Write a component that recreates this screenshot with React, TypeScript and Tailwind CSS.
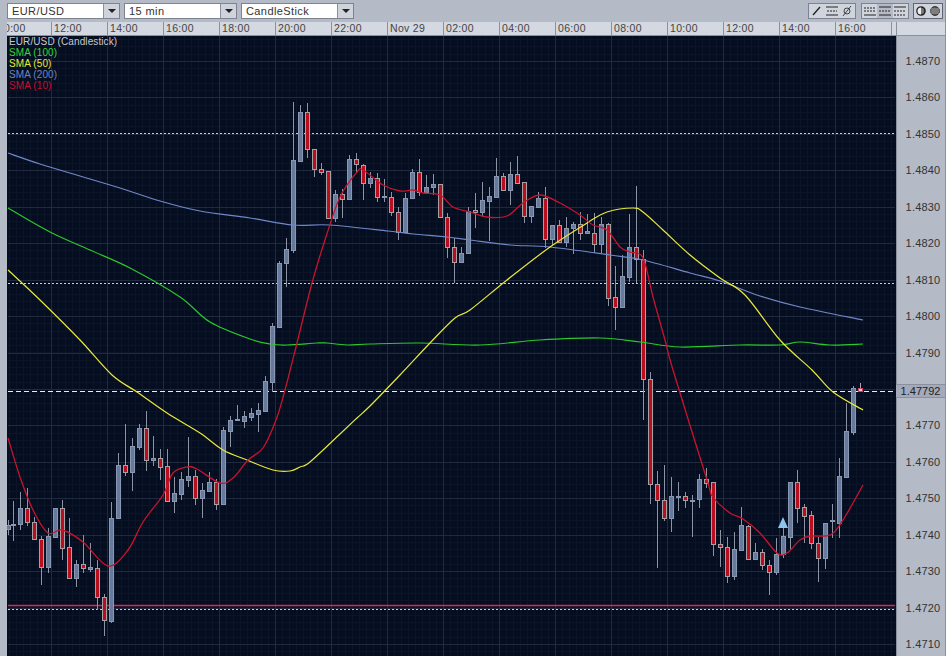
import React from 'react';

type Candle = [number, number, number, number, number, number?];

// x, wick top, body top, body bottom, wick bottom (trailing 1 = down candle)
const candles: Candle[] = [
  [8, 520, 525, 529, 535],
  [13, 501, 524, 525, 541],
  [20, 492, 508, 524, 530],
  [27, 488, 508, 522, 526, 1],
  [34, 517, 522, 539, 540, 1],
  [41, 536, 539, 567, 585, 1],
  [48, 528, 536, 567, 573],
  [55, 508, 508, 537, 537],
  [62, 500, 508, 548, 560, 1],
  [69, 518, 547, 578, 578, 1],
  [76, 560, 564, 578, 587],
  [83, 535, 564, 568, 573, 1],
  [90, 543, 567, 569, 572],
  [97, 560, 568, 597, 610, 1],
  [104, 594, 597, 620, 636, 1],
  [111, 502, 518, 621, 623],
  [118, 453, 465, 518, 518],
  [125, 424, 465, 472, 476, 1],
  [132, 438, 446, 472, 491],
  [139, 424, 428, 447, 450],
  [146, 411, 428, 460, 471, 1],
  [153, 436, 458, 460, 466],
  [160, 449, 458, 467, 480, 1],
  [167, 449, 466, 501, 500, 1],
  [174, 477, 493, 501, 513],
  [181, 472, 479, 494, 500],
  [188, 437, 476, 480, 487],
  [195, 470, 476, 498, 505, 1],
  [202, 483, 490, 498, 518],
  [209, 472, 482, 491, 491],
  [216, 479, 482, 504, 510, 1],
  [223, 427, 430, 504, 504],
  [230, 416, 420, 431, 447],
  [237, 405, 419, 420, 420],
  [244, 411, 416, 421, 428],
  [251, 408, 413, 417, 421],
  [258, 403, 410, 414, 432],
  [265, 376, 381, 411, 411],
  [272, 323, 326, 382, 392],
  [279, 261, 263, 327, 327],
  [286, 238, 249, 263, 287],
  [293, 102, 160, 250, 253],
  [300, 105, 112, 161, 161],
  [307, 103, 112, 149, 158, 1],
  [314, 149, 149, 169, 177, 1],
  [321, 163, 169, 172, 175, 1],
  [328, 171, 171, 218, 218, 1],
  [335, 190, 194, 218, 222],
  [342, 189, 194, 199, 218, 1],
  [349, 155, 159, 199, 199],
  [356, 153, 159, 164, 172, 1],
  [363, 164, 165, 183, 200, 1],
  [370, 172, 178, 183, 188],
  [377, 173, 178, 197, 202, 1],
  [384, 179, 196, 197, 202],
  [391, 192, 197, 212, 216, 1],
  [398, 207, 212, 232, 240, 1],
  [405, 193, 198, 232, 233],
  [412, 169, 172, 198, 198],
  [419, 159, 172, 192, 196, 1],
  [426, 175, 187, 192, 193],
  [433, 174, 184, 187, 195],
  [440, 184, 184, 217, 217, 1],
  [447, 213, 217, 247, 258, 1],
  [454, 238, 247, 262, 283, 1],
  [461, 247, 253, 262, 262],
  [468, 207, 211, 253, 254],
  [475, 193, 210, 212, 228, 1],
  [482, 182, 200, 212, 216],
  [489, 187, 196, 201, 241],
  [496, 158, 176, 197, 197],
  [503, 173, 176, 190, 190, 1],
  [510, 162, 174, 190, 205],
  [517, 156, 174, 183, 183, 1],
  [524, 182, 182, 216, 223, 1],
  [531, 206, 206, 216, 223],
  [538, 192, 198, 207, 207],
  [545, 187, 198, 239, 248, 1],
  [552, 225, 225, 239, 245],
  [559, 220, 225, 242, 243, 1],
  [566, 217, 228, 242, 247],
  [573, 222, 224, 228, 254],
  [580, 212, 224, 233, 240, 1],
  [587, 214, 231, 233, 233],
  [594, 213, 233, 244, 253, 1],
  [601, 217, 224, 244, 253],
  [608, 223, 224, 298, 306, 1],
  [615, 266, 297, 307, 330, 1],
  [622, 255, 276, 307, 307],
  [629, 214, 247, 277, 282],
  [636, 186, 247, 259, 283, 1],
  [643, 250, 259, 379, 420, 1],
  [650, 372, 379, 484, 504, 1],
  [657, 471, 484, 500, 568, 1],
  [664, 465, 500, 518, 521, 1],
  [671, 477, 496, 518, 532],
  [678, 482, 496, 497, 511],
  [685, 492, 496, 500, 508, 1],
  [692, 495, 500, 501, 537],
  [699, 474, 479, 499, 508],
  [706, 468, 479, 483, 488, 1],
  [713, 482, 482, 544, 556, 1],
  [720, 530, 544, 547, 567, 1],
  [727, 537, 547, 576, 583, 1],
  [734, 532, 549, 576, 580],
  [741, 507, 525, 550, 551],
  [748, 525, 526, 559, 559, 1],
  [755, 543, 552, 559, 559],
  [762, 549, 552, 565, 570, 1],
  [769, 560, 565, 572, 595, 1],
  [776, 538, 554, 572, 575],
  [783, 527, 536, 554, 558],
  [790, 482, 482, 537, 549],
  [797, 470, 482, 508, 523, 1],
  [804, 504, 507, 516, 543, 1],
  [811, 511, 515, 543, 549, 1],
  [818, 537, 543, 558, 582, 1],
  [825, 523, 523, 558, 569],
  [832, 504, 520, 521, 538],
  [839, 458, 476, 523, 538],
  [846, 403, 431, 477, 478],
  [853, 386, 388, 432, 435],
];

const sma200 = '8,153 40,164 80,176 120,188 160,201 200,211 250,218 293,225 330,225 388,231 413,234 447,237 470,240 510,245 550,247 610,255 643,260 690,273 720,281 760,296 800,307 863,320';
const sma100 = '8,208 50,232 90,250 130,268 180,297 210,322 250,339 270,344 287,345 317,343 327,343 347,345 370,344 420,343 480,345 540,340 600,338 640,342 680,347 740,345 780,345 800,342 830,345 863,344';
const sma50 = '8,270 40,300 80,340 112,375 137,392 167,413 200,433 223,450 247,460 273,470 290,471 300,467 310,462 340,434 357,418 370,406 400,375 430,343 455,318 470,310 507,280 550,247 587,223 607,212 633,208 643,212 663,230 690,255 720,278 745,295 780,340 812,370 833,392 863,410';
const sma10 = '8,438 20,477 33,510 48,533 62,530 83,542 108,566 128,550 143,522 163,495 173,473 187,467 197,469 220,483 233,478 248,460 263,448 276,420 285,390 297,343 312,283 325,240 340,197 357,172 363,170 383,185 400,191 413,190 423,193 440,195 453,207 470,212 487,217 507,216 523,203 540,195 560,203 580,215 593,225 607,230 620,247 630,252 643,258 653,297 665,340 673,370 707,480 713,497 730,513 743,519 760,533 777,553 787,553 800,540 810,536 830,535 843,520 863,485';

// catmull-rom through the sampled points so the averages read as curves
const smooth = (points: string) => {
  const p = points.split(' ').map((s) => s.split(',').map(Number));
  let d = `M${p[0][0]} ${p[0][1]}`;
  for (let i = 0; i < p.length - 1; i++) {
    const a = p[Math.max(i - 1, 0)];
    const b = p[i];
    const c = p[i + 1];
    const e = p[Math.min(i + 2, p.length - 1)];
    d += ` C${b[0] + (c[0] - a[0]) / 6} ${b[1] + (c[1] - a[1]) / 6} ${c[0] - (e[0] - b[0]) / 6} ${c[1] - (e[1] - b[1]) / 6} ${c[0]} ${c[1]}`;
  }
  return d;
};

const timeLabels = ['12:00', '14:00', '16:00', '18:00', '20:00', '22:00', 'Nov 29', '02:00', '04:00', '06:00', '08:00', '10:00', '12:00', '14:00', '16:00'];
const prices = ['1.4870', '1.4860', '1.4850', '1.4840', '1.4830', '1.4820', '1.4810', '1.4800', '1.4790', '', '1.4770', '1.4760', '1.4750', '1.4740', '1.4730', '1.4720', '1.4710'];
const legend: [string, string][] = [
  ['EUR/USD (Candlestick)', 'text-[#c4cad4]'],
  ['SMA (100)', 'text-[#35d835]'],
  ['SMA (50)', 'text-[#e8e83c]'],
  ['SMA (200)', 'text-[#6d84c4]'],
  ['SMA (10)', 'text-[#c4102a]'],
];

const Picker = ({ label }: { label: string }) => (
  <div className="flex h-[16px] w-[113px] border border-[#7d8390] bg-white">
    <div className="flex-1 pl-1 text-[11px] leading-[14px] tracking-[0.4px] text-[#333]">{label}</div>
    <div className="flex w-[16px] items-center justify-center border-l border-[#8a909c] bg-[#cfd3db]">
      <div className="h-0 w-0 border-x-[4px] border-t-[4px] border-x-transparent border-t-[#222]" />
    </div>
  </div>
);

const ToolIcon = ({ children, active, narrow }: { children: React.ReactNode; active?: boolean; narrow?: boolean }) => (
  <div className={`flex h-[14px] items-center justify-center ${narrow ? 'w-[14px]' : 'w-[15.33px]'} ${active ? 'bg-[#b4bac6]' : 'bg-[#d0d4dc]'}`}>
    <svg width="12" height="12" viewBox="0 0 12 12" fill="none" stroke="#222" strokeWidth="1">
      {children}
    </svg>
  </div>
);

const Chart = () => {
  const major = Array.from({ length: 17 }, (_, i) => 61 + i * 36.44);
  const vert = timeLabels.map((_, i) => 51 + i * 56);
  const minorH = Array.from({ length: 86 }, (_, i) => 39 + i * 7.288);
  const minorV = Array.from({ length: 128 }, (_, i) => 9 + i * 7);
  return (
    <svg className="absolute left-0 top-0" width="889" height="620" viewBox="7 36 889 620">
      {minorH.map((y) => (
        <line key={y} x1="8" x2="895" y1={Math.round(y) + 0.5} y2={Math.round(y) + 0.5} stroke="#0c1427" />
      ))}
      {minorV.map((x) => (
        <line key={x} x1={x + 0.5} x2={x + 0.5} y1="36" y2="656" stroke="#0c1427" />
      ))}
      {major.map((y) => (
        <line key={y} x1="8" x2="895" y1={Math.round(y) + 0.5} y2={Math.round(y) + 0.5} stroke="#20293d" />
      ))}
      {vert.map((x) => (
        <line key={x} x1={x + 0.5} x2={x + 0.5} y1="36" y2="656" stroke="#20293d" />
      ))}
      <line x1="8" x2="895" y1="133.5" y2="133.5" stroke="#e8e820" strokeDasharray="2 2" />
      <line x1="8" x2="895" y1="283.5" y2="283.5" stroke="#e8e820" strokeDasharray="2 2" />
      <line x1="8" x2="895" y1="609.5" y2="609.5" stroke="#e8e820" strokeDasharray="2 2" />
      <line x1="8" x2="895" y1="605.5" y2="605.5" stroke="#d8285a" strokeWidth="1.5" />
      <line x1="8" x2="895" y1="391.5" y2="391.5" stroke="#e8ecf4" strokeDasharray="5 3" />
      {candles.map(([x, wt, bt, bb, wb, down]) => (
        <g key={x}>
          <line x1={x + 0.5} x2={x + 0.5} y1={wt} y2={wb} stroke="#8d94a4" />
          <rect
            x={x - 1.5}
            y={bt + 0.5}
            width="4"
            height={Math.max(bb - bt, 1)}
            fill={down ? '#b80f1e' : '#667a9e'}
            stroke={down ? '#a8a0a4' : '#8a97b0'}
          />
        </g>
      ))}
      <line x1="860.5" x2="860.5" y1="383" y2="392" stroke="#a0a6b4" />
      <rect x="858.5" y="388.5" width="4" height="3" fill="#f0c8d0" stroke="#d04060" />
      <path d={smooth(sma200)} fill="none" stroke="#7088c8" strokeWidth="1.2" />
      <path d={smooth(sma100)} fill="none" stroke="#2cc82c" strokeWidth="1.2" />
      <path d={smooth(sma50)} fill="none" stroke="#e8e83c" strokeWidth="1.2" />
      <path d={smooth(sma10)} fill="none" stroke="#c8142c" strokeWidth="1.3" />
      <polygon points="783,517 788,528 778,528" fill="#8cc4ec" />
    </svg>
  );
};

const App: React.FC = () => {
  return (
    <div className="h-[661px] w-[948px] bg-white font-['Liberation_Sans',sans-serif]">
      <div className="flex h-[656px] w-[946px] flex-col border-r border-[#8a909c] bg-[#b4bac6]">
        <div className="flex h-[22px] shrink-0 items-start pl-[7px] pr-[2px] pt-[3px]">
          <div className="flex gap-[4px]">
            <Picker label="EUR/USD" />
            <Picker label="15 min" />
            <Picker label="CandleStick" />
          </div>
          <div className="flex-1" />
          <div className="flex border border-[#7d8390]">
            <ToolIcon><path d="M2 10 L9 2" strokeWidth="1.4" /></ToolIcon>
            <ToolIcon><path d="M0 2H12 M0 10H12" /><path d="M1 6H11" strokeDasharray="2 1" /></ToolIcon>
            <ToolIcon><circle cx="6" cy="6" r="3" strokeWidth="0.8" /><path d="M2 11 L10 1" strokeWidth="0.8" /></ToolIcon>
          </div>
          <div className="ml-[5px] flex border border-[#7d8390]">
            <ToolIcon><path d="M0 3H12 M0 6H12" strokeDasharray="2 1" /><path d="M0 10H12" /></ToolIcon>
            <ToolIcon active><path d="M0 2H12 M0 10H12" /><path d="M0 6H12" strokeDasharray="2 1" /></ToolIcon>
            <ToolIcon><path d="M0 2H12" /><path d="M0 6H12 M0 10H12" strokeDasharray="2 1" /></ToolIcon>
          </div>
          <div className="ml-[4px] flex border border-[#5f6572]">
            <ToolIcon narrow><circle cx="6" cy="6" r="4" fill="#777" strokeWidth="1.6" /><path d="M6 2.5 A3.5 3.5 0 0 0 6 9.5 Z" fill="#eee" stroke="none" /></ToolIcon>
            <ToolIcon narrow><circle cx="6" cy="6" r="4.5" fill="#555" strokeWidth="0.8" /><path d="M2 4H10 M1.5 6H10.5 M2 8H10" stroke="#bbb" strokeWidth="0.8" /></ToolIcon>
          </div>
        </div>
        <div className="flex h-[14px] shrink-0">
          <div className="w-[7px]" />
          <div className="flex w-[889px] overflow-hidden border-b border-[#8a909c] bg-[#d4d8e0] text-[10.5px] leading-[13px] tracking-[0.3px] text-[#444]">
            <div className="w-[44px] shrink-0 overflow-hidden">
              <div className="-ml-[3px]">0:00</div>
            </div>
            {timeLabels.map((t, i) => (
              <div key={i} className="w-[56px] shrink-0 border-l border-[#8a909c] pl-[2px]">{t}</div>
            ))}
            <div className="w-[5px] shrink-0 border-l border-[#8a909c]" />
          </div>
          <div className="flex-1 border-b border-l border-[#8a909c] bg-[#d4d8e0]" />
        </div>
        <div className="relative flex h-[620px] shrink-0 overflow-hidden">
          <div className="w-[7px]" />
          <div className="relative w-[889px] overflow-hidden bg-[#050d20] pl-[2px]">
            <Chart />
            {legend.map(([name, color]) => (
              <div key={name} className={`relative h-[11px] text-[10px] leading-[11px] tracking-[0.1px] ${color}`}>{name}</div>
            ))}
          </div>
          <div className="flex flex-1 flex-col items-center border-l border-[#8a909c] pl-1 pt-[18px] text-[11px] text-[#333]">
            {prices.map((p, i) => (
              <div key={i} className="h-[36.44px] shrink-0 leading-[14px] tracking-[0.2px]">{p}</div>
            ))}
          </div>
          <div className="absolute left-[896px] top-[348px] flex h-[14px] w-[49px] items-center justify-center border-y border-[#8a909c] bg-[#a2aabb] text-[11px] text-[#222]">1.47792</div>
        </div>
      </div>
    </div>
  );
};

export default App;
